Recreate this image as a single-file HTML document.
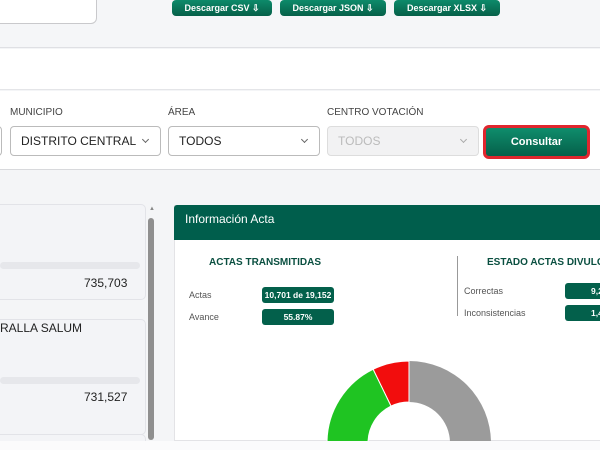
<!DOCTYPE html>
<html><head><meta charset="utf-8"><style>
*{margin:0;padding:0;box-sizing:border-box}
html,body{width:600px;height:450px;overflow:hidden}
body{background:#f4f5f7;font-family:"Liberation Sans",sans-serif}
#w{position:relative;width:600px;height:450px;overflow:hidden}
.a{position:absolute}
.btn{background:linear-gradient(#0d8a6a,#066049);color:#fff;font-size:9px;font-weight:bold;text-align:center;line-height:16px;border-radius:4px;height:16px;top:0}
.lbl{font-size:10px;color:#444}
.sel{background:#fff;border:1px solid #bbb;border-radius:4px;height:30px;top:126px;font-size:12px;line-height:28px;padding-left:10px;color:#222}
.chev{position:absolute;right:12px;top:10px;width:5px;height:5px;border-right:1px solid #666;border-bottom:1px solid #666;transform:rotate(45deg)}
.card{background:#f3f4f7;border:1px solid #e2e3e8;border-radius:5px;left:-6px;width:152px}
.bar{height:7px;background:#e6e7eb;border-radius:4px;left:0;width:140px}
.num{font-size:12px;color:#222}
.badge{background:#03604b;color:#fff;font-size:8.5px;font-weight:bold;text-align:center;border-radius:3px;height:16px;line-height:16px;white-space:nowrap;overflow:hidden}
.sm{font-size:9px;color:#555}
</style></head><body><div id="w">
<div class="a" style="left:0;top:0;width:600px;height:48px;background:#f5f6f8;border-bottom:1px solid #dfe0e4"></div>
<div class="a" style="left:-10px;top:-10px;width:107px;height:34px;background:#fff;border:1px solid #c9c9cc;border-radius:6px"></div>
<div class="a btn" style="left:172px;width:100px">Descargar CSV ⇩</div>
<div class="a btn" style="left:280px;width:106px">Descargar JSON ⇩</div>
<div class="a btn" style="left:394px;width:106px">Descargar XLSX ⇩</div>
<div class="a" style="left:0;top:49px;width:600px;height:41px;background:#fff;border-bottom:1px solid #e4e5e8"></div>
<div class="a" style="left:0;top:91px;width:600px;height:79px;background:#fff;border-bottom:1px solid #d8d9dc"></div>
<div class="a lbl" style="left:10px;top:107px">MUNICIPIO</div>
<div class="a lbl" style="left:168px;top:107px">ÁREA</div>
<div class="a lbl" style="left:327px;top:107px">CENTRO VOTACIÓN</div>
<div class="a sel" style="left:-10px;width:12px"></div>
<div class="a sel" style="left:10px;width:151px">DISTRITO CENTRAL<span class="chev"></span></div>
<div class="a sel" style="left:168px;width:152px">TODOS<span class="chev"></span></div>
<div class="a sel" style="left:327px;width:152px;background:#f2f2f3;border-color:#ddd;color:#bbb">TODOS<span class="chev" style="border-color:#aaa"></span></div>
<div class="a" style="left:483px;top:125px;width:107px;height:34px;border:3px solid #e0262e;border-radius:6px;background:linear-gradient(#0f8d6c,#05604a);color:#fff;font-size:11px;font-weight:bold;text-align:center;line-height:28px">Consultar</div>

<div class="a card" style="top:204px;height:96px"></div>
<div class="a bar" style="top:262px"></div>
<div class="a num" style="top:276px;left:84px">735,703</div>
<div class="a card" style="top:319px;height:116px"></div>
<div class="a" style="left:0;top:321px;font-size:12px;color:#222">RALLA SALUM</div>
<div class="a bar" style="top:377px"></div>
<div class="a num" style="top:390px;left:84px">731,527</div>
<div class="a card" style="top:434px;height:30px"></div>
<div class="a" style="left:149px;top:206px;font-size:6px;color:#888">▲</div>
<div class="a" style="left:148px;top:218px;width:6px;height:222px;background:#8f8f8f;border-radius:3px"></div>

<div class="a" style="left:174px;top:205px;width:426px;height:236px;background:#fff;border:1px solid #e3e3e6;border-right:none"></div>
<div class="a" style="left:174px;top:205px;width:426px;height:35px;background:#005e4c;border-radius:3px 0 0 0;color:#fff;font-size:12px;line-height:28px;padding-left:11px">Información Acta</div>
<div class="a" style="left:209px;top:257px;font-size:10px;font-weight:bold;color:#0a4f40">ACTAS TRANSMITIDAS</div>
<div class="a" style="left:487px;top:257px;width:113px;overflow:hidden;font-size:10px;font-weight:bold;color:#0a4f40;white-space:nowrap">ESTADO ACTAS DIVULGADAS</div>
<div class="a" style="left:457px;top:256px;width:1px;height:60px;background:#999"></div>
<div class="a sm" style="left:189px;top:290px">Actas</div>
<div class="a sm" style="left:189px;top:312px">Avance</div>
<div class="a badge" style="left:262px;top:287px;width:72px">10,701 de 19,152</div>
<div class="a badge" style="left:262px;top:309px;width:72px">55.87%</div>
<div class="a sm" style="left:464px;top:286px">Correctas</div>
<div class="a sm" style="left:464px;top:308px">Inconsistencias</div>
<div class="a badge" style="left:565px;top:283px;width:35px;text-align:left;padding-left:26px;border-radius:3px 0 0 3px">9,2</div>
<div class="a badge" style="left:565px;top:305px;width:35px;text-align:left;padding-left:26px;border-radius:3px 0 0 3px">1,4</div>
<svg class="a" style="left:0;top:0" width="600" height="441" viewBox="0 0 600 441">
<path d="M409,361 A82,82 0 0 1 491,443 L450,443 A41,41 0 0 0 409,402 Z" fill="#9b9b9b"/>
<path d="M409,361 A82,82 0 0 0 373.1,369.3 L391,406.1 A41,41 0 0 1 409,402 Z" fill="#f20d0d" stroke="#fff" stroke-width="1"/>
<path d="M373.1,369.3 A82,82 0 0 0 327,443 L368,443 A41,41 0 0 1 391,406.1 Z" fill="#1fc422" stroke="#fff" stroke-width="1"/>
</svg>
<div class="a" style="left:0;top:441px;width:600px;height:9px;background:#fbfbfc"></div>
</div></body></html>
